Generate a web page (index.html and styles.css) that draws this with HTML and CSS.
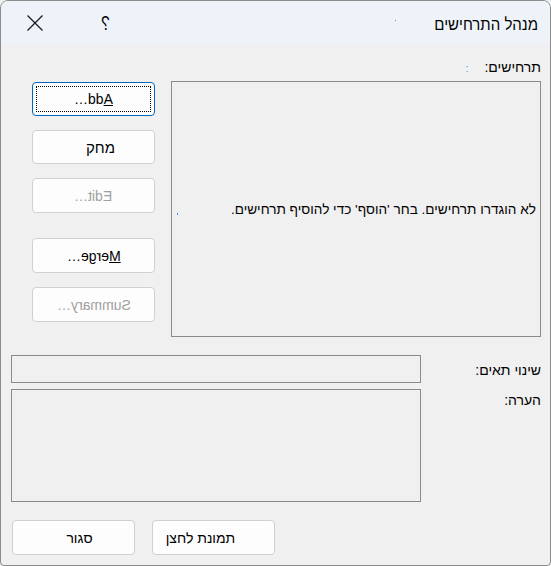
FILE: index.html
```html
<!DOCTYPE html>
<html lang="he" dir="rtl">
<head>
<meta charset="utf-8">
<title>מנהל התרחישים</title>
<link rel="stylesheet" href="styles.css">
</head>
<body>
<div class="dialog">
  <div class="titlebar">
    <div class="title">מנהל התרחישים</div>
    <span class="tdot"></span>
    <div class="help"><span class="qmark">?</span></div>
    <div class="close"><svg width="16" height="16" viewBox="0 0 16 16"><path d="M0.5 0.5L15.5 15.5M15.5 0.5L0.5 15.5" stroke="#1b1b1b" stroke-width="1.3" fill="none"/></svg></div>
  </div>
  <div class="content">
    <div class="lbl-scen">תרחישים:<span class="bluecolon">:</span></div>
    <div class="scen-row">
      <div class="listbox">
        <div class="empty">לא הוגדרו תרחישים. בחר 'הוסף' כדי להוסיף תרחישים.</div>
        <span class="bdot"></span>
      </div>
      <div class="btncol">
        <div class="btn focus"><span class="focusrect"><span class="mirror ltr"><u>A</u>dd…</span></span></div>
        <div class="btn b-del"><span class="shift-r">מחק</span></div>
        <div class="btn disabled b-edit"><span class="mirror ltr">Edit…</span></div>
        <div class="btn b-merge"><span class="mirror ltr"><u>M</u>erge…</span></div>
        <div class="btn disabled b-sum"><span class="mirror ltr">Summary…</span></div>
      </div>
    </div>
    <div class="field-row">
      <div class="flabel">שינוי תאים:</div>
      <div class="input"></div>
    </div>
    <div class="field-row note-row">
      <div class="flabel note-label">הערה:</div>
      <div class="textarea"></div>
    </div>
    <div class="bottom-row">
      <div class="btn b-pic">תמונת לחצן</div>
      <div class="btn b-close">סגור</div>
    </div>
  </div>
</div>
</body>
</html>
```

FILE: styles.css
```css
* { box-sizing: border-box; }
html, body { margin: 0; padding: 0; background: #f0f0f0; }
body {
  font-family: "Liberation Sans", Arial, sans-serif;
  font-size: 14px;
  color: #000;
}
.dialog {
  width: 551px;
  height: 566px;
  border: 1px solid #8c8c8c;
  border-radius: 8px 8px 4px 4px;
  background: #f0f0f0;
  overflow: hidden;
}
.titlebar {
  height: 43px;
  background: #eef2f9;
  display: flex;
  align-items: center;
  padding-right: 12px;
}
.title {
  font-size: 15px;
  color: #000;
  margin-top: 4px;
  transform: scaleY(1.08);
}
.tdot {
  width: 1px;
  height: 1px;
  background: #7a7a7a;
  margin-right: 38px;
  margin-top: -4px;
}
.help {
  margin-right: auto;
  width: 8px;
  display: flex;
  justify-content: center;
  margin-top: 1px;
}
.qmark {
  display: inline-block;
  font-size: 16px;
  transform: scale(-0.95, 1.3);
}
.close {
  width: 16px;
  height: 16px;
  margin-right: 58px;
  margin-left: 26px;
  display: flex;
}
.mirror {
  display: inline-block;
  transform: scaleX(-1);
}
.ltr { direction: ltr; unicode-bidi: isolate; }
.content {
  padding: 0 9px 0 10px;
}
.lbl-scen {
  margin-top: 15px;
  height: 16px;
  line-height: 16px;
}
.bluecolon {
  color: #5b9bd5;
  margin-right: 16px;
  font-size: 11px;
}
.scen-row {
  display: flex;
  gap: 16px;
  margin-top: 6px;
}
.listbox {
  position: relative;
  width: 370px;
  height: 256px;
  border: 1px solid #8a8a8a;
  background: #f0f0f0;
  display: flex;
  align-items: center;
  padding-right: 4px;
}
.empty {
  margin-top: 1px;
  font-size: 13.6px;
}
.bdot {
  position: absolute;
  left: 5px;
  top: 131px;
  width: 1px;
  height: 2px;
  background: #4a90e2;
}
.btncol {
  width: 123px;
  display: flex;
  flex-direction: column;
  padding-top: 1px;
}
.btn {
  height: 34px;
  width: 123px;
  background: #fdfdfd;
  border: 1px solid #d0d0d0;
  border-radius: 4px;
  display: flex;
  align-items: center;
  justify-content: center;
  color: #000;
  font-size: 14px;
}
.btn.disabled { color: #a0a0a0; }
.btn.focus {
  border-color: #0067c0;
  padding: 3px;
}
.focusrect {
  width: 100%;
  height: 100%;
  border: 1px dotted #000;
  display: flex;
  align-items: center;
  justify-content: center;
}
.b-del { margin-top: 14px; }
.shift-r { margin-left: 14px; font-size: 15px; }
.b-edit { margin-top: 14px; height: 35px; }
.b-merge { margin-top: 25px; height: 35px; }
.b-sum { margin-top: 14px; height: 35px; }
.field-row {
  display: flex;
  margin-top: 18px;
}
.flabel {
  width: 120px;
  padding-top: 7px;
}
.input {
  width: 410px;
  height: 28px;
  border: 1px solid #8a8a8a;
  background: #f0f0f0;
}
.note-row { margin-top: 6px; }
.note-label { padding-top: 3px; }
.textarea {
  width: 410px;
  height: 113px;
  border: 1px solid #8a8a8a;
  background: #f0f0f0;
}
.bottom-row {
  display: flex;
  justify-content: flex-end;
  gap: 17px;
  margin-top: 18px;
  padding-left: 1px;
}
.b-pic { height: 35px; padding-left: 0; padding-right: 26px; }
.b-close { height: 35px; padding-right: 0; padding-left: 12px; }
```
